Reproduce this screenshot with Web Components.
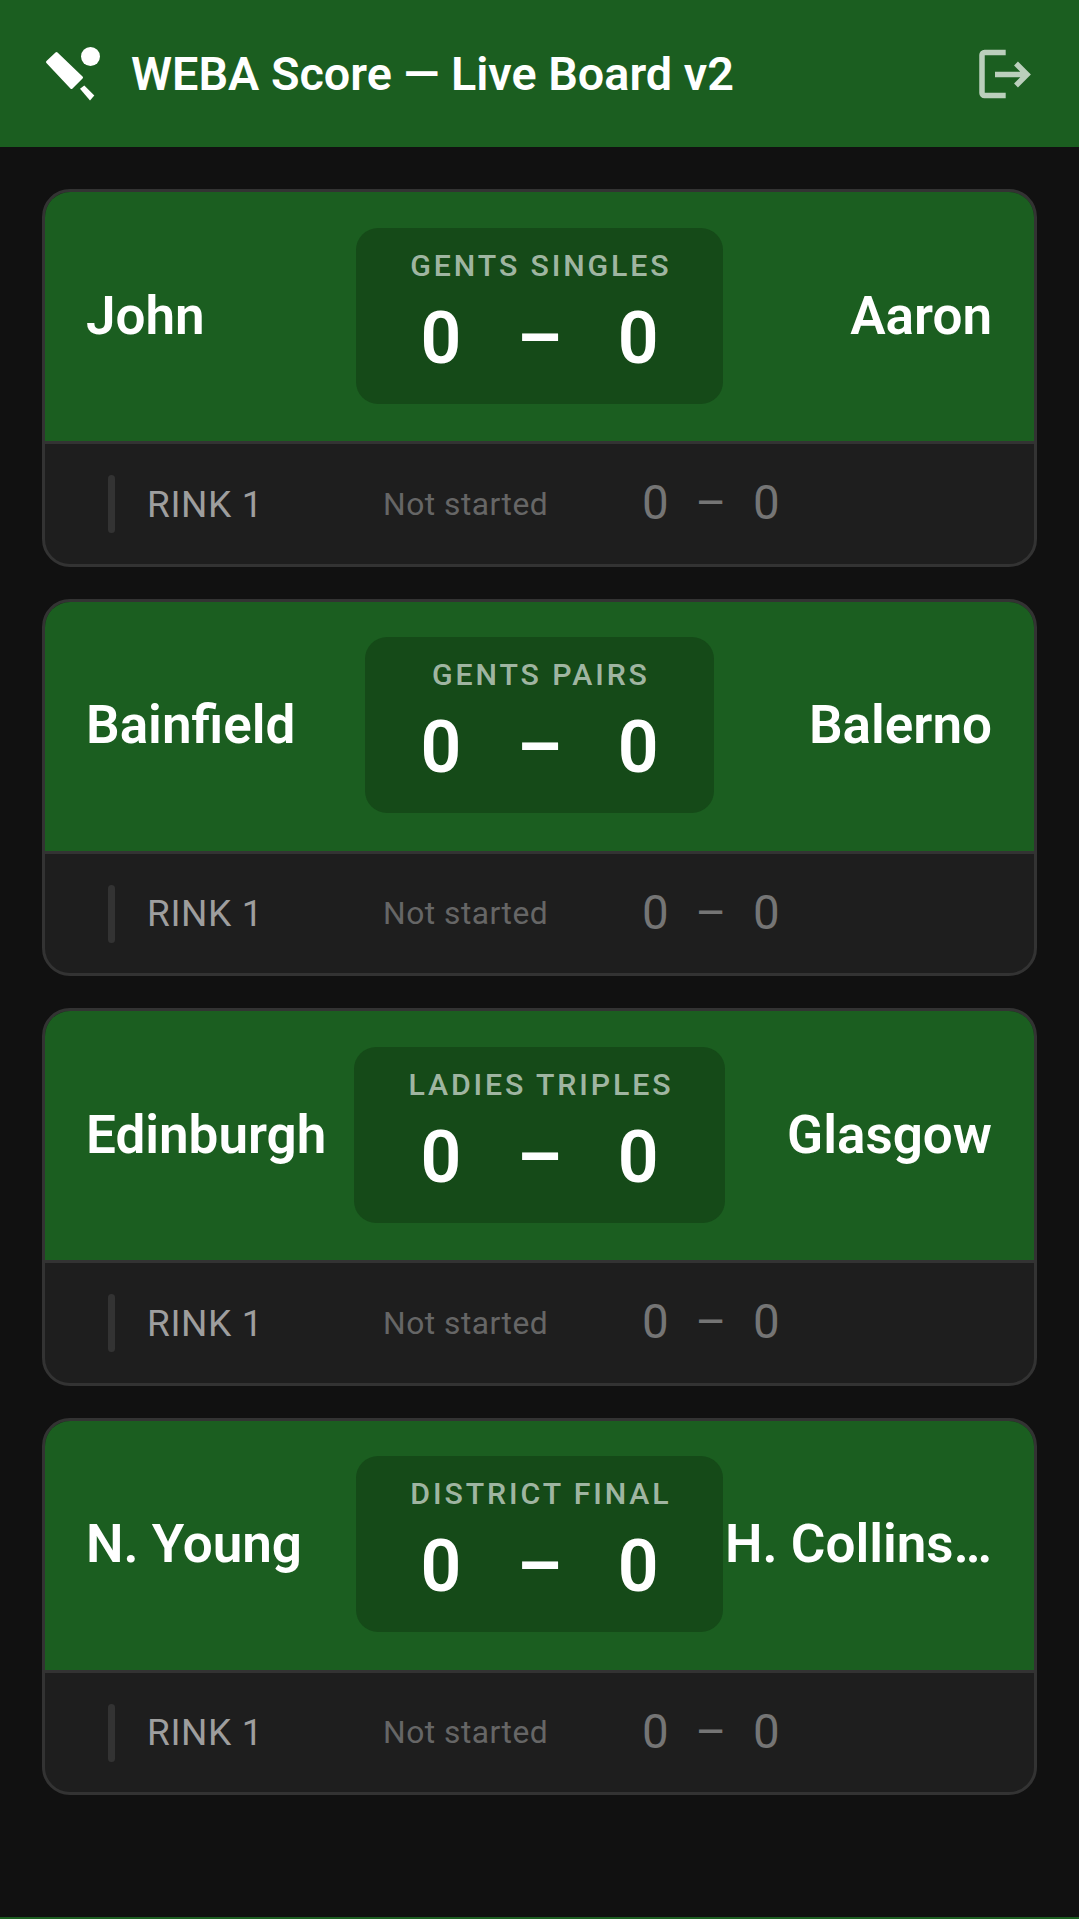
<!DOCTYPE html>
<html lang="en">
<head>
<meta charset="utf-8">
<title>WEBA Score</title>
<style>
	html, body { margin: 0; height: 100%; background: #111111; }
	body { font-family: Roboto, "Noto Sans", sans-serif; }
</style>
</head>
<body>
<live-board>
	<match-card label="GENTS SINGLES" rink="RINK 1" status="Not started">
		<span slot="home">John</span>
		<span slot="away">Aaron</span>
	</match-card>
	<match-card label="GENTS PAIRS" rink="RINK 1" status="Not started">
		<span slot="home">Bainfield</span>
		<span slot="away">Balerno</span>
	</match-card>
	<match-card label="LADIES TRIPLES" rink="RINK 1" status="Not started">
		<span slot="home">Edinburgh</span>
		<span slot="away">Glasgow</span>
	</match-card>
	<match-card label="DISTRICT FINAL" rink="RINK 1" status="Not started">
		<span slot="home">N. Young</span>
		<span slot="away">H. Collins…</span>
	</match-card>
</live-board>

<script>
class BoardHeader extends HTMLElement {
	constructor() {
		super();
		this.attachShadow({ mode: "open" });
		this.shadowRoot.innerHTML = `
      <style>
        :host {
          display: flex;
          align-items: center;
          height: 147px;
          padding: 0 9px 0 36px;
          background: #1b5e20;
          color: #fff;
          box-sizing: border-box;
        }
        svg { width: 66px; height: 66px; flex: none; display: block; }
        h1 {
          flex: 1;
          margin: 2px 0 0 29px;
          font-size: 46.75px;
          font-weight: 600;
          line-height: 1;
          white-space: nowrap;
        }
        .exit { margin-right: 34px; }
      </style>
      <svg viewBox="0 0 66 66" fill="#fff" stroke="#fff" stroke-linejoin="round">
        <circle cx="54.5" cy="15.5" r="9.5" stroke="none"/>
        <path d="M20.5 12.5 11.5 21 35.5 46.5 45.5 36.5Z" stroke-width="3"/>
        <path d="M44 47.8 48.3 44.5 58.3 54.5 54 59.5Z" stroke="none"/>
      </svg>
      <h1><slot></slot></h1>
      <svg class="exit" viewBox="0 0 66 66" fill="none" stroke="#fff" stroke-opacity=".7" stroke-width="5.5">
        <path d="M35.7 11.5H14.5a2.5 2.5 0 0 0-2.5 2.5v38a2.5 2.5 0 0 0 2.5 2.5h21.2"/>
        <path d="M25 33.5H57M46 22.5 57 33.5 46 44.5"/>
      </svg>
    `;
	}
}

class MatchCard extends HTMLElement {
	constructor() {
		super();
		this.attachShadow({ mode: "open" });
	}

	connectedCallback() {
		const label = this.getAttribute("label") || "";
		const rink = this.getAttribute("rink") || "";
		const status = this.getAttribute("status") || "";
		this.shadowRoot.innerHTML = `
      <style>
        :host {
          display: block;
          height: 377.5px;
          border: 3px solid #333333;
          border-radius: 28px;
          overflow: hidden;
          box-sizing: border-box;
          background: #1e1e1e;
        }
        .top {
          display: grid;
          grid-template-columns: minmax(0, 1fr) auto minmax(0, 1fr);
          gap: 3px;
          align-items: center;
          height: 252px;
          padding: 0 42px;
          box-sizing: border-box;
          background: #1b5e20;
          color: #fff;
          border-bottom: 3px solid #333333;
        }
        .name {
          font-size: 53px;
          font-weight: 600;
          line-height: 1.2;
          white-space: nowrap;
        }
        .name.home { margin-left: -1px; }
        .name.away { display: flex; justify-content: flex-end; }
        .box {
          display: flex;
          flex-direction: column;
          align-items: center;
          min-width: 349px;
          height: 176px;
          margin-top: -2px;
          padding: 22px 54.2px 0;
          box-sizing: border-box;
          background: #154a18;
          border-radius: 22px;
        }
        .label {
          margin-right: -2.9px;
          font-size: 30.25px;
          font-weight: 500;
          letter-spacing: 2.9px;
          line-height: 32px;
          color: rgba(255, 255, 255, 0.62);
          white-space: nowrap;
        }
        .score {
          display: flex;
          gap: 55.5px;
          margin-top: 15px;
          font-size: 71.5px;
          font-weight: 600;
          line-height: 84px;
        }
        .bottom {
          display: flex;
          align-items: center;
          height: 120px;
          padding-left: 63px;
          box-sizing: border-box;
        }
        .bar {
          width: 7px;
          height: 58px;
          border-radius: 4px;
          background: #333333;
          margin-right: 32px;
        }
        .rink { width: 236px; font-size: 37px; letter-spacing: .6px; color: #9e9e9e; }
        .status { width: 259px; font-size: 31.75px; letter-spacing: .5px; color: #666666; }
        .mini {
          display: flex;
          gap: 26.5px;
          margin-top: -2px;
          font-size: 47.5px;
          color: #757575;
        }
      </style>
      <div class="top">
        <div class="name home"><slot name="home"></slot></div>
        <div class="box">
          <div class="label">${label}</div>
          <div class="score"><span>0</span><span>–</span><span>0</span></div>
        </div>
        <div class="name away"><slot name="away"></slot></div>
      </div>
      <div class="bottom">
        <div class="bar"></div>
        <div class="rink">${rink}</div>
        <div class="status">${status}</div>
        <div class="mini"><span>0</span><span>–</span><span>0</span></div>
      </div>
    `;
	}
}

class LiveBoard extends HTMLElement {
	constructor() {
		super();
		this.attachShadow({ mode: "open" });
		this.shadowRoot.innerHTML = `
      <style>
        :host {
          display: flex;
          flex-direction: column;
          min-height: 100vh;
          box-sizing: border-box;
          background: #111111;
          border-bottom: 2px solid #1b5e20;
        }
        main {
          display: flex;
          flex-direction: column;
          gap: 32px;
          padding: 42px 42px 0;
        }
      </style>
      <board-header>WEBA Score — Live Board v2</board-header>
      <main><slot></slot></main>
    `;
	}
}

customElements.define("board-header", BoardHeader);
customElements.define("match-card", MatchCard);
customElements.define("live-board", LiveBoard);
</script>
</body>
</html>
